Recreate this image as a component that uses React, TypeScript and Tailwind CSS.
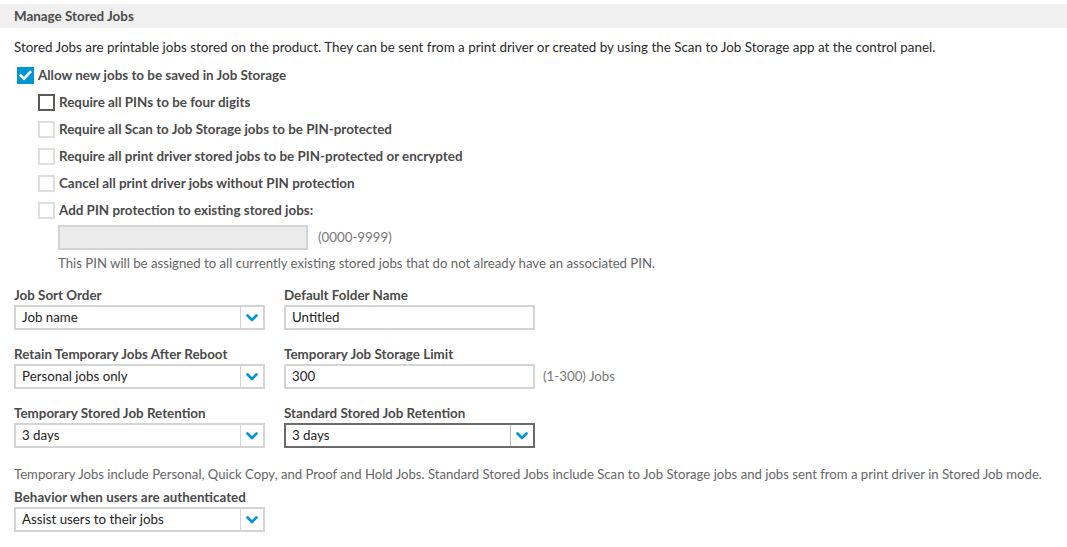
import React from "react";

const font = { fontFamily: "Lato, 'Liberation Sans', sans-serif" };

function Chevron() {
  return (
    <svg width="12" height="8" viewBox="0 0 12 8" fill="none">
      <path d="M1.5 1.5 L6 6 L10.5 1.5" stroke="#0096d6" strokeWidth="2.6" strokeLinecap="round" strokeLinejoin="round" />
    </svg>
  );
}

function Select({ value, focused }: { value: string; focused?: boolean }) {
  return (
    <div
      className={`flex h-[25px] w-[251px] shrink-0 items-stretch border-2 bg-white ${focused ? "border-[#6b6b6b]" : "border-[#d4d4d4]"}`}
    >
      <div className="flex flex-1 items-center pl-[6px] text-[13.3px] text-[#222]">{value}</div>
      <div className={`flex w-[23px] items-center justify-center border-l ${focused ? "border-[#bcbcbc]" : "border-[#d4d4d4]"}`}>
        <Chevron />
      </div>
    </div>
  );
}

function TextInput({ value }: { value: string }) {
  return (
    <div className="flex h-[25px] w-[251px] shrink-0 items-center border-2 border-[#d4d4d4] bg-white pl-[6px] text-[13.3px] text-[#222]">
      {value}
    </div>
  );
}

function Box({ state }: { state: "checked" | "enabled" | "disabled" }) {
  if (state === "checked") {
    return (
      <div className="flex h-[17px] w-[17px] shrink-0 items-center justify-center bg-[#0096d6]">
        <svg width="13" height="11" viewBox="0 0 13 11" fill="none">
          <path d="M1.8 5.6 L5 8.6 L11.2 2" stroke="white" strokeWidth="2.6" strokeLinecap="square" />
        </svg>
      </div>
    );
  }
  return (
    <div
      className={`h-[17px] w-[17px] shrink-0 border-2 bg-white ${state === "enabled" ? "border-[#5a5a5a]" : "border-[#dedede]"}`}
    />
  );
}

function CheckRow({ label, state }: { label: string; state: "checked" | "enabled" | "disabled" }) {
  return (
    <div className="flex h-[17px] items-center gap-[4px]">
      <Box state={state} />
      <span className="text-[13.4px] font-bold text-[#4a4a4a]">{label}</span>
    </div>
  );
}

function Field({ label, children }: { label: string; children: React.ReactNode }) {
  return (
    <div className="flex flex-col gap-[2px]">
      <div className="h-[16px] whitespace-nowrap text-[13.4px] font-bold leading-[16px] text-[#4a4a4a]">{label}</div>
      {children}
    </div>
  );
}

export default function App() {
  return (
    <div className="min-h-[547px] w-full bg-white pt-[4px]" style={font}>
      <div className="flex h-[24px] items-center bg-[#f0f0f0] pl-[14px] pt-[1px] text-[13.4px] font-bold text-[#4a4a4a]">
        Manage Stored Jobs
      </div>
      <div className="px-[14px]">
        <div className="mt-[11px] whitespace-nowrap text-[13.4px] leading-[16px] text-[#2a2a2a]">
          Stored Jobs are printable jobs stored on the product. They can be sent from a print driver or created by using the Scan to Job Storage app at the control panel.
        </div>
        <div className="mt-[12px] pl-[3px]">
          <CheckRow state="checked" label="Allow new jobs to be saved in Job Storage" />
        </div>
        <div className="mt-[10px] flex flex-col gap-[10px] pl-[24px]">
          <CheckRow state="enabled" label="Require all PINs to be four digits" />
          <CheckRow state="disabled" label="Require all Scan to Job Storage jobs to be PIN-protected" />
          <CheckRow state="disabled" label="Require all print driver stored jobs to be PIN-protected or encrypted" />
          <CheckRow state="disabled" label="Cancel all print driver jobs without PIN protection" />
          <CheckRow state="disabled" label="Add PIN protection to existing stored jobs:" />
        </div>
        <div className="mt-[6px] pl-[44px]">
          <div className="flex items-center gap-[10px]">
            <div className="h-[25px] w-[250px] border-2 border-[#d4d4d4] bg-[#ececec]" />
            <span className="text-[13.3px] text-[#777]">(0000-9999)</span>
          </div>
          <div className="mt-[5px] whitespace-nowrap text-[13.2px] leading-[16px] text-[#666]">
            This PIN will be assigned to all currently existing stored jobs that do not already have an associated PIN.
          </div>
        </div>
        <div className="mt-[16px] grid grid-cols-[251px_251px_1fr] gap-x-[19px] gap-y-[16px]">
          <Field label="Job Sort Order">
            <Select value="Job name" />
          </Field>
          <Field label="Default Folder Name">
            <TextInput value="Untitled" />
          </Field>
          <div />
          <Field label="Retain Temporary Jobs After Reboot">
            <Select value="Personal jobs only" />
          </Field>
          <Field label="Temporary Job Storage Limit">
            <div className="flex w-[400px] items-center">
              <TextInput value="300" />
              <span className="ml-[8px] whitespace-nowrap text-[13.3px] text-[#777]">(1-300) Jobs</span>
            </div>
          </Field>
          <div />
          <Field label="Temporary Stored Job Retention">
            <Select value="3 days" />
          </Field>
          <Field label="Standard Stored Job Retention">
            <Select value="3 days" focused />
          </Field>
          <div />
        </div>
        <div className="mt-[18px] whitespace-nowrap text-[13.15px] leading-[16px] text-[#666]">
          Temporary Jobs include Personal, Quick Copy, and Proof and Hold Jobs. Standard Stored Jobs include Scan to Job Storage jobs and jobs sent from a print driver in Stored Job mode.
        </div>
        <div className="mt-[7px]">
          <Field label="Behavior when users are authenticated">
            <Select value="Assist users to their jobs" />
          </Field>
        </div>
      </div>
    </div>
  );
}
